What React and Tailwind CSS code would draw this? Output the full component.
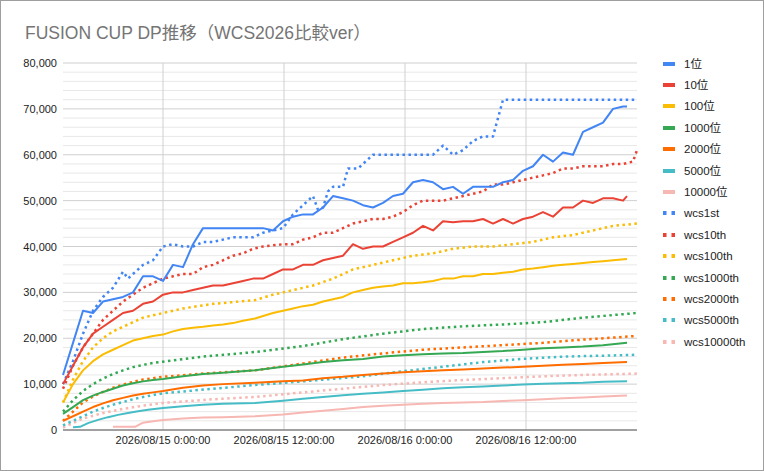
import React from "react";

const Y = (v) => 430 - (v * 367) / 80;

const S = [
  { n: "1位", c: "#4285f4", d: false, p: [[63,12],[73,19],[83,26],[93,25.5],[103,28],[113,28.5],[123,29],[133,30],[143,33.5],[153,33.5],[163,32.5],[173,36],[183,35.5],[193,40.5],[203,44],[213,44],[223,44],[233,44],[243,44],[253,44],[263,44],[273,43.5],[283,45.5],[293,46.5],[303,47],[313,47],[323,48.5],[333,51],[343,50.5],[353,50],[363,49],[373,48.5],[383,49.5],[393,51],[403,51.5],[413,54],[423,54.5],[433,54],[443,52.5],[453,53],[463,51.5],[473,53],[483,53],[493,53],[503,54],[513,54.5],[523,56.5],[533,57.5],[543,60],[553,58.5],[563,60.5],[573,60],[583,65],[593,66],[603,67],[613,70],[623,70.5],[627,70.5]] },
  { n: "10位", c: "#ea4335", d: false, p: [[63,10],[73,14],[83,18],[93,21],[103,22.5],[113,24],[123,25.5],[133,26],[143,27.5],[153,28],[163,29.5],[173,30],[183,30],[193,30.5],[203,31],[213,31.5],[223,31.5],[233,32],[243,32.5],[253,33],[263,33],[273,34],[283,35],[293,35],[303,36],[313,36],[323,37],[333,37.5],[343,38],[353,40.5],[363,39.5],[373,40],[383,40],[393,41],[403,42],[413,43],[423,44.5],[433,43.5],[443,45.5],[453,45.3],[463,45.5],[473,45.5],[483,46],[493,45],[503,46],[513,45],[523,46],[533,46.5],[543,47.5],[553,46.5],[563,48.5],[573,48.5],[583,50],[593,49.5],[603,50.5],[613,50.5],[623,50],[627,51]] },
  { n: "100位", c: "#fbbc04", d: false, p: [[63,6],[73,10],[83,13],[93,15],[103,16.5],[113,17.5],[123,18.5],[133,19.5],[143,20],[153,20.5],[163,20.8],[173,21.5],[183,22],[193,22.3],[203,22.5],[213,22.8],[223,23],[233,23.3],[243,23.8],[255,24.3],[273,25.5],[283,26],[293,26.5],[303,27],[313,27.3],[323,28],[333,28.5],[343,29],[353,30],[363,30.5],[373,31],[383,31.3],[393,31.5],[403,32],[413,32],[423,32.2],[433,32.5],[443,33],[453,33],[463,33.5],[473,33.5],[483,34],[493,34],[503,34.3],[513,34.5],[523,35],[533,35.2],[543,35.5],[553,35.8],[563,36],[573,36.2],[583,36.4],[593,36.6],[603,36.8],[613,37],[627,37.3]] },
  { n: "1000位", c: "#34a853", d: false, p: [[63,3.5],[73,5],[83,6.5],[93,7.5],[103,8.3],[113,9],[123,9.7],[133,10.2],[143,10.6],[153,10.9],[163,11.1],[183,11.7],[203,12.2],[223,12.5],[255,13],[283,13.8],[303,14.3],[323,14.8],[343,15.2],[363,15.5],[383,16],[403,16.3],[423,16.5],[443,16.7],[463,16.8],[483,17],[503,17.2],[523,17.5],[543,17.8],[563,18],[583,18.2],[603,18.5],[627,19]] },
  { n: "2000位", c: "#ff6d01", d: false, p: [[63,2],[73,3],[83,4],[93,5],[103,5.8],[113,6.5],[123,7],[133,7.5],[143,7.9],[153,8.2],[163,8.5],[183,9.2],[203,9.7],[223,10],[255,10.3],[283,10.6],[303,10.8],[323,11.3],[343,11.6],[363,12],[383,12.3],[403,12.6],[423,12.8],[443,13],[463,13.2],[483,13.4],[503,13.6],[523,13.8],[543,14],[563,14.2],[583,14.4],[603,14.6],[627,14.8]] },
  { n: "5000位", c: "#46bdc6", d: false, p: [[73,0.6],[80,0.7],[88,1.5],[98,2.2],[108,2.8],[118,3.3],[128,3.7],[138,4.1],[148,4.4],[163,4.8],[183,5.2],[203,5.5],[223,5.7],[255,5.9],[283,6.4],[303,6.8],[323,7.2],[343,7.6],[363,7.9],[383,8.2],[403,8.5],[423,8.8],[443,9.1],[463,9.3],[483,9.5],[503,9.7],[523,9.9],[543,10.1],[563,10.2],[583,10.3],[603,10.5],[627,10.6]] },
  { n: "10000位", c: "#f7b7b2", d: false, p: [[113,0.7],[135,0.7],[143,1.6],[153,1.9],[163,2.2],[183,2.5],[203,2.7],[223,2.8],[255,3],[283,3.4],[303,3.8],[323,4.2],[343,4.6],[363,5],[383,5.3],[403,5.5],[423,5.7],[443,5.9],[463,6],[483,6.1],[503,6.3],[523,6.5],[543,6.7],[563,6.9],[583,7.1],[603,7.3],[627,7.5]] },
  { n: "wcs1st", c: "#4285f4", d: true, p: [[63,10],[73,15],[83,21],[93,26],[103,29],[113,31],[123,34.5],[128,33],[133,34],[143,36],[153,37],[163,40],[173,40.5],[183,40],[193,40],[203,41],[213,41],[233,42],[253,42],[263,43],[273,43.5],[283,44],[293,47],[303,49],[313,51],[318,48],[323,48.5],[328,52],[333,53],[343,53],[348,57],[358,57],[363,58],[373,60],[433,60],[443,62],[453,60],[463,61],[473,63],[483,64],[493,64],[503,72],[637,72]] },
  { n: "wcs10th", c: "#ea4335", d: true, p: [[63,9],[73,14],[83,18],[93,21],[103,24],[113,26],[123,28],[133,29.5],[143,31],[153,32],[163,33],[173,33.5],[183,34],[193,34],[203,35.5],[213,36],[223,37],[233,38],[243,38.5],[253,39.5],[263,40],[283,40.5],[293,40.5],[303,41.5],[313,42],[323,43],[333,43],[343,44],[353,45],[363,45.5],[373,46],[383,46],[393,46.5],[403,47.5],[413,49],[423,50],[443,50],[453,50.5],[463,51],[473,51.5],[483,52],[493,53.5],[503,53.5],[513,54],[523,54.5],[533,55],[543,55.5],[553,56],[563,57],[573,57],[583,57.5],[603,57.5],[613,58],[623,58],[633,58.5],[637,61]] },
  { n: "wcs100th", c: "#fbbc04", d: true, p: [[63,6],[73,11],[83,15],[93,18],[103,20],[113,21.5],[123,22.5],[133,23.5],[143,24.5],[153,25],[163,25.5],[183,26.5],[213,27.5],[255,28.3],[273,29.5],[293,30.5],[313,31.5],[333,33],[353,35],[373,36],[393,37],[413,38],[433,38.5],[453,39.5],[473,40],[493,40],[513,40.5],[533,41],[553,42],[573,42.5],[593,43.5],[613,44.5],[637,45]] },
  { n: "wcs1000th", c: "#34a853", d: true, p: [[63,4],[73,6.5],[83,8.5],[93,10],[103,11.2],[113,12.2],[123,13],[133,13.7],[143,14.2],[153,14.6],[163,14.9],[203,16],[255,17],[303,18.3],[343,19.8],[383,21],[423,22],[463,22.6],[503,23],[543,23.5],[583,24.5],[637,25.5]] },
  { n: "wcs2000th", c: "#ff6d01", d: true, p: [[63,2],[73,4],[83,6],[93,7.3],[103,8.3],[113,9.2],[123,9.9],[133,10.5],[143,11],[153,11.3],[163,11.6],[203,12.3],[255,13],[303,14.5],[343,15.8],[383,16.7],[423,17.5],[463,18],[503,18.5],[543,19],[583,19.7],[637,20.5]] },
  { n: "wcs5000th", c: "#46bdc6", d: true, p: [[63,1],[73,2],[83,3],[93,4],[103,4.8],[113,5.5],[123,6.1],[133,6.7],[143,7.2],[153,7.6],[163,8],[213,9],[255,9.8],[303,10.6],[363,11.7],[403,12.8],[443,13.8],[483,14.8],[523,15.5],[563,16],[603,16.2],[637,16.4]] },
  { n: "wcs10000th", c: "#f7b7b2", d: true, p: [[63,0.5],[83,2.5],[103,3.7],[123,4.6],[143,5.3],[163,5.9],[213,6.7],[255,7.2],[303,8.2],[343,9],[383,9.8],[423,10.4],[463,10.9],[503,11.3],[543,11.7],[583,12],[637,12.3]] },
];

const font = { fontFamily: '"Liberation Sans", Arial, "Noto Sans CJK JP", sans-serif' };

export default function App() {
  const minor = [];
  for (let v = 0; v <= 80; v += 2) minor.push(v);
  const xl = [[163, "2026/08/15 0:00:00"], [284, "2026/08/15 12:00:00"], [405, "2026/08/16 0:00:00"], [526, "2026/08/16 12:00:00"]];
  return (
    <div className="w-[764px] h-[471px] border border-[#9e9e9e] bg-white flex flex-col overflow-hidden box-border" style={font}>
      <div className="h-[49px] pt-[16px] pl-[24px] flex items-center text-[17.5px] text-[#757575]">FUSION CUP DP推移（WCS2026比較ver）</div>
      <div className="flex items-start">
        <svg width="644" height="420" viewBox="1 50 644 420" className="shrink-0">
          {minor.map((v) => (
            <line key={v} x1="63" x2="637" y1={Y(v)} y2={Y(v)} stroke={v % 10 === 0 ? "#cfcfcf" : "#e8e8e8"} strokeWidth="1" />
          ))}
          {xl.map(([x]) => (
            <line key={x} x1={x} x2={x} y1="63" y2="430" stroke="#d0d0d0" strokeWidth="1" />
          ))}
          <line x1="63" x2="637" y1="430" y2="430" stroke="#888" strokeWidth="1.5" />
          {[0,10,20,30,40,50,60,70,80].map((v) => (
            <text key={v} x="57" y={Y(v) + 4} textAnchor="end" fontSize="11" fill="#222">{v === 0 ? "0" : v + ",000"}</text>
          ))}
          {xl.map(([x, t]) => (
            <text key={t} x={x} y="444" textAnchor="middle" fontSize="11" fill="#222">{t}</text>
          ))}
          {S.slice().reverse().map((s) => (
            <polyline key={s.n} points={s.p.map(([x, v]) => `${x},${Y(v)}`).join(" ")} fill="none" stroke={s.c} strokeWidth={s.d ? 2.5 : 2} strokeDasharray={s.d ? "2.5 3.5" : undefined} strokeLinejoin="round" />
          ))}
        </svg>
        <div className="flex flex-col pt-[3px] pl-[18px]">
          {S.map((s) => (
            <div key={s.n} className="h-[21.4px] shrink-0 flex items-center gap-[9px] text-[11.5px] leading-[14px] text-[#222]">
              <svg width="12" height="4" className="block">
                <line x1="0" x2="12" y1="2" y2="2" stroke={s.c} strokeWidth="4" strokeDasharray={s.d ? "3.5 5" : undefined} />
              </svg>
              <span>{s.n}</span>
            </div>
          ))}
        </div>
      </div>
    </div>
  );
}
